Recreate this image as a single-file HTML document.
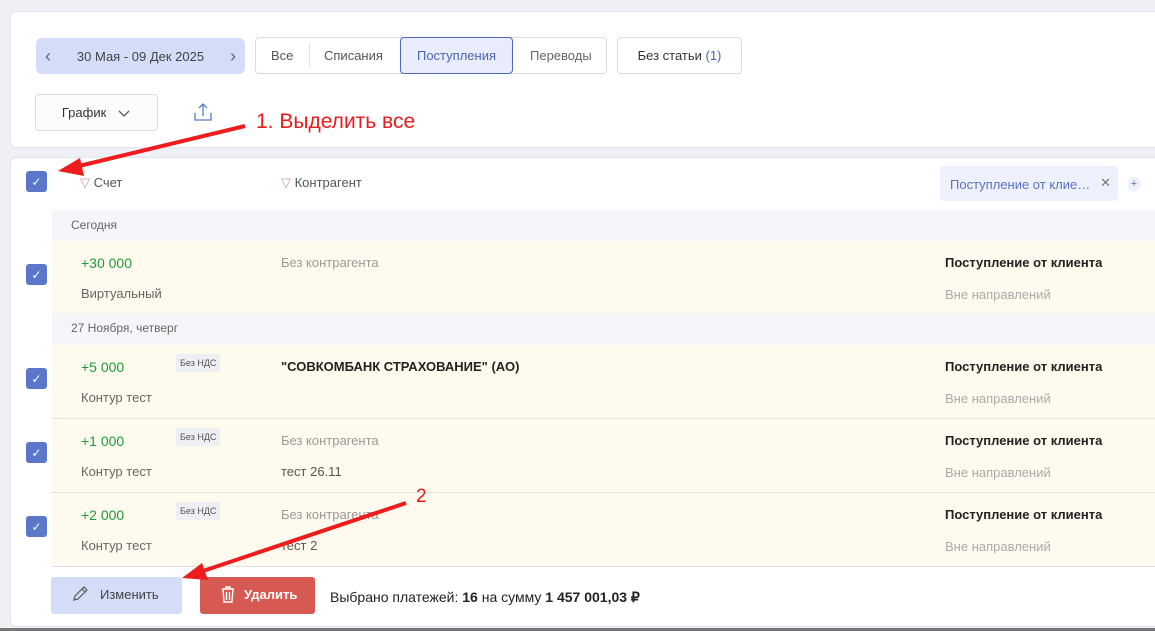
<!DOCTYPE html>
<html><head><meta charset="utf-8"><style>
*{box-sizing:border-box;margin:0;padding:0}
body{width:1155px;height:631px;overflow:hidden;background:#eff0f5;font-family:"Liberation Sans",sans-serif;font-size:13px;color:#333;position:relative}
.abs{position:absolute}
.card{position:absolute;background:#fff;border:1px solid #e2e4ec;border-radius:6px}
.btn{position:absolute;border:1px solid #d8dbe6;border-radius:4px;background:#fff;display:flex;align-items:center;justify-content:center;font-size:13px;color:#555}
.cb{position:absolute;left:26px;width:21px;height:21px;border-radius:3px;background:#5a77c9;color:#fff;font-size:12px;display:flex;align-items:center;justify-content:center}
.grp{position:absolute;left:52px;right:0;height:32px;background:#f5f6fa;font-size:12px;color:#666;padding:8px 0 0 19px}
.row{position:absolute;left:52px;right:0;background:#fffaee;border-bottom:1px solid #dfe1ea}
.amt{position:absolute;left:29px;top:14px;color:#1f9a3a;font-size:14px}
.acc{position:absolute;left:29px;top:45px;color:#666}
.tag{position:absolute;left:124px;top:9px;background:#eeeff3;font-size:9px;color:#555;padding:4px 4px;border-radius:2px}
.ctr{position:absolute;left:229px;top:14px;color:#999}
.ctr2{position:absolute;left:229px;top:45px;color:#555}
.cat{position:absolute;left:893px;top:14px;font-weight:bold;color:#222}
.dir{position:absolute;left:893px;top:46px;color:#aaa}
</style></head><body>
<div class="card" style="left:10px;top:11px;width:1160px;height:137px"></div>
<div class="abs" style="left:36px;top:38px;width:209px;height:36px;background:#d3ddf8;border-radius:6px;display:flex;align-items:center;justify-content:space-between;padding:0 9px;color:#444"><span style="color:#667;font-size:18px">‹</span><span>30 Мая - 09 Дек 2025</span><span style="color:#667;font-size:18px">›</span></div>
<div class="btn" style="left:255px;top:37px;width:352px;height:37px"></div>
<div class="abs" style="left:309px;top:44px;width:1px;height:22px;background:#dde"></div>
<div class="abs" style="left:271px;top:48px;color:#555">Все</div>
<div class="abs" style="left:324px;top:48px;color:#555">Списания</div>
<div class="abs" style="left:400px;top:37px;width:113px;height:37px;border:1px solid #4d68b5;border-radius:4px;background:#e9edfb;color:#4a65b3;display:flex;align-items:center;justify-content:center">Поступления</div>
<div class="abs" style="left:530px;top:48px;color:#666">Переводы</div>
<div class="btn" style="left:617px;top:37px;width:125px;height:37px;color:#333">Без статьи&nbsp;<span style="color:#4a65b3">(1)</span></div>
<div class="btn" style="left:35px;top:94px;width:123px;height:37px;color:#333;background:#fbfcfe">График&nbsp;&nbsp;&nbsp;<svg width="14" height="10" viewBox="0 0 14 10" fill="none" stroke="#555" stroke-width="1.3"><path d="M2 3l5 5 5-5"/></svg></div>
<svg class="abs" style="left:192px;top:101px" width="22" height="22" viewBox="0 0 22 22" fill="none" stroke="#5a79c8" stroke-width="1.3"><path d="M11 15V3M7 7l4-4 4 4M3 12v7h16v-7"/></svg>
<div class="abs" style="left:256px;top:110px;color:#e81c1c;font-size:21px">1. Выделить все</div>

<div class="card" style="left:10px;top:157px;width:1160px;height:470px"></div>
<div class="cb" style="top:171px">✓</div>
<div class="abs" style="left:80px;top:175px;color:#555"><span style="color:#c9a">▽</span> Счет</div>
<div class="abs" style="left:281px;top:175px;color:#555"><span style="color:#c9a">▽</span> Контрагент</div>
<div class="abs" style="left:940px;top:166px;width:178px;height:35px;background:#eef0fd;border-radius:4px;color:#5a72c0;padding:11px 0 0 10px">Поступление от клие…<span style="position:absolute;right:7px;top:9px;color:#777">✕</span></div>
<div class="abs" style="left:1127px;top:177px;width:14px;height:14px;border-radius:7px;background:#eef0fd;color:#5a72c0;font-size:11px;text-align:center;line-height:14px">+</div>

<div class="grp" style="top:210px">Сегодня</div>
<div class="row" style="top:241px;height:73px"><div class="amt">+30 000</div><div class="acc">Виртуальный</div><div class="ctr">Без контрагента</div><div class="cat">Поступление от клиента</div><div class="dir">Вне направлений</div></div>
<div class="cb" style="top:264px">✓</div>
<div class="grp" style="top:313px">27 Ноября, четверг</div>
<div class="row" style="top:345px;height:74px"><div class="amt">+5 000</div><div class="tag">Без НДС</div><div class="acc">Контур тест</div><div class="ctr" style="color:#222;font-weight:bold">"СОВКОМБАНК СТРАХОВАНИЕ" (АО)</div><div class="cat">Поступление от клиента</div><div class="dir">Вне направлений</div></div>
<div class="cb" style="top:368px">✓</div>
<div class="row" style="top:419px;height:74px"><div class="amt">+1 000</div><div class="tag">Без НДС</div><div class="acc">Контур тест</div><div class="ctr">Без контрагента</div><div class="ctr2">тест 26.11</div><div class="cat">Поступление от клиента</div><div class="dir">Вне направлений</div></div>
<div class="cb" style="top:442px">✓</div>
<div class="row" style="top:493px;height:74px"><div class="amt">+2 000</div><div class="tag">Без НДС</div><div class="acc">Контур тест</div><div class="ctr">Без контрагента</div><div class="ctr2">тест 2</div><div class="cat">Поступление от клиента</div><div class="dir">Вне направлений</div></div>
<div class="cb" style="top:516px">✓</div>

<div class="abs" style="left:51px;top:577px;width:131px;height:37px;background:#d3ddf8;border-radius:3px;color:#444;padding:10px 0 0 49px">Изменить</div>
<svg class="abs" style="left:71px;top:585px" width="18" height="18" viewBox="0 0 18 18" fill="none" stroke="#555" stroke-width="1.2"><path d="M3 15l1-4 9-9 3 3-9 9z M11 4l3 3"/></svg>
<div class="abs" style="left:200px;top:577px;width:115px;height:37px;background:#d65a52;border-radius:3px;color:#fff;font-weight:bold;padding:10px 0 0 44px">Удалить</div>
<svg class="abs" style="left:220px;top:585px" width="16" height="19" viewBox="0 0 16 19" fill="none" stroke="#fff" stroke-width="1.4"><path d="M2 4h12M6 4V2h4v2M3 4l1 13h8l1-13M6.5 7v8M9.5 7v8"/></svg>
<div class="abs" style="left:330px;top:589px;color:#222;font-size:14px">Выбрано платежей: <b>16</b> на сумму <b>1 457 001,03 ₽</b></div>
<div class="abs" style="left:416px;top:486px;color:#e81c1c;font-size:19px">2</div>

<svg class="abs" style="left:0;top:0" width="1155" height="631">
<g stroke="#ee1c1c" stroke-width="4" fill="#ee1c1c">
<line x1="245" y1="126" x2="75" y2="167"/><polygon points="58,171 80,158 84,176" stroke="none"/>
<line x1="406" y1="503" x2="200" y2="572"/><polygon points="182,578 202,563 208,580" stroke="none"/>
</g></svg>
<div class="abs" style="left:0;top:628px;width:1155px;height:3px;background:#777"></div>
</body></html>
